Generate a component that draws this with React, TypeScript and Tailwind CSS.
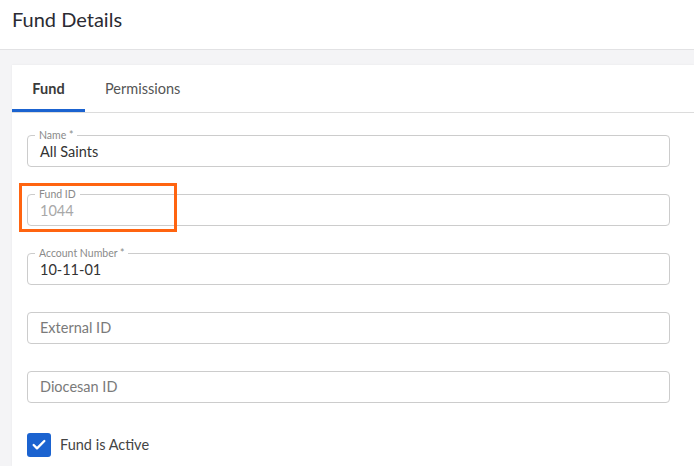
import { Check } from 'lucide-react';

type FieldProps = {
  label: string;
  value?: string;
  disabled?: boolean;
  highlight?: boolean;
};

function Field({ label, value, disabled, highlight }: FieldProps) {
  return (
    <div className="relative h-[32px] rounded-[4px] border border-[#cccccc] bg-white">
      {value !== undefined ? (
        <>
          <span className="absolute left-[7px] -top-[7px] bg-white px-[4px] text-[10.5px] leading-[12px] text-[#8a8a8a]">
            {label}
          </span>
          <div
            className={`flex h-full items-center pl-[12px] pt-[1px] text-[14.5px] ${
              disabled ? 'text-[#a8a8a8]' : 'text-[#333333]'
            }`}
          >
            {value}
          </div>
        </>
      ) : (
        <div className="flex h-full items-center pl-[12px] text-[14.5px] text-[#7a7a7a]">{label}</div>
      )}
      {highlight && (
        <div className="pointer-events-none absolute -left-[9px] -top-[12px] h-[49px] w-[158px] border-[3px] border-[#ff6410]" />
      )}
    </div>
  );
}

export default function App() {
  return (
    <div
      className="min-h-[466px] w-[694px] bg-[#f4f4f6]"
      style={{ fontFamily: 'Lato, "Liberation Sans", sans-serif' }}
    >
      <header className="flex h-[50px] items-start border-b border-[#e2e2e4] bg-white pl-[12px] pt-[4px]">
        <h1 className="text-[20px] font-normal text-[#2b2b33]">Fund Details</h1>
      </header>

      <div className="ml-[12px] mt-[15px] min-h-[401px] bg-white shadow-[0_0_2px_rgba(0,0,0,0.06)]">
        <nav className="flex h-[48px] border-b border-[#dcdcdc]">
          <button className="flex w-[73px] items-center justify-center border-b-[3px] border-[#1b63d0] pt-[3px] text-[14.5px] font-bold text-[#3a3a3a]">
            Fund
          </button>
          <button className="flex items-center px-[20px] text-[14.5px] text-[#555555]">Permissions</button>
        </nav>

        <div className="flex flex-col gap-[27px] pl-[15px] pr-[24px] pt-[22px]">
          <Field label="Name *" value="All Saints" />
          <Field label="Fund ID" value="1044" disabled highlight />
          <Field label="Account Number *" value="10-11-01" />
          <Field label="External ID" />
          <Field label="Diocesan ID" />

          <label className="mt-[3px] flex items-center gap-[9px]">
            <span className="flex h-[24px] w-[24px] items-center justify-center rounded-[3px] bg-[#1b63d0]">
              <Check className="h-[16px] w-[16px] text-white" strokeWidth={3.5} />
            </span>
            <span className="text-[14.5px] text-[#444444]">Fund is Active</span>
          </label>
        </div>
      </div>
    </div>
  );
}
